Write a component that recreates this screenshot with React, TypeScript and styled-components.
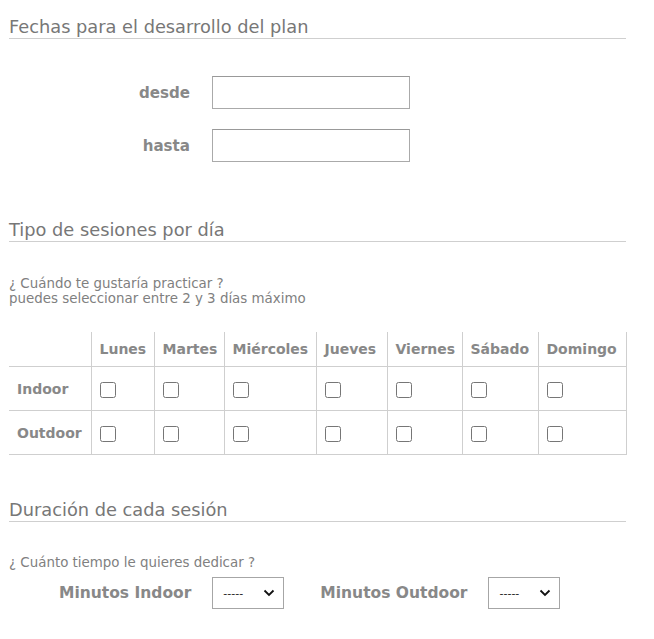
import React from "react";
import styled, { createGlobalStyle } from "styled-components";

const GlobalStyle = createGlobalStyle`
  body {
    margin: 0;
    background: #fff;
    font-family: "DejaVu Sans", Verdana, sans-serif;
    color: #808080;
  }
`;

const days = ["Lunes", "Martes", "Miércoles", "Jueves", "Viernes", "Sábado", "Domingo"];
const colWidths = [82, 63, 70, 92, 71, 75, 76, 88];
const kinds = ["Indoor", "Outdoor"];

const Page = styled.div`
  padding: 17px 28px 30px 9px;
`;

const Heading = styled.h2<{ $top?: number }>`
  margin: ${(p) => p.$top ?? 0}px 0 0;
  padding: 0 0 1px;
  font-size: 17.8px;
  font-weight: normal;
  line-height: 20px;
  color: #777;
  border-bottom: 1px solid #cfcfcf;
`;

const DateGrid = styled.div`
  display: grid;
  grid-template-columns: 181px 198px;
  column-gap: 22px;
  row-gap: 20px;
  margin-top: 37px;
`;

const FieldLabel = styled.label`
  align-self: center;
  text-align: right;
  font-size: 15.1px;
  font-weight: bold;
  color: #888;
`;

const TextInput = styled.input`
  box-sizing: border-box;
  height: 33px;
  width: 198px;
  margin: 0;
  border: 1px solid #aaa;
  border-top-color: #999;
  background: #fff;
`;

const Note = styled.p<{ $top: number }>`
  margin: ${(p) => p.$top}px 0 0;
  font-size: 13.4px;
  line-height: 15px;
  color: #808080;
`;

const DaysTable = styled.table`
  margin-top: 26px;
  width: 617px;
  border-collapse: collapse;
  table-layout: fixed;
`;

const Cell = styled.td<{ $head?: boolean }>`
  height: ${(p) => (p.$head ? 34 : 43)}px;
  padding: 0 0 0 8px;
  border-right: 1px solid #cfcfcf;
  border-bottom: 1px solid #cfcfcf;
  font-size: 14px;
  font-weight: bold;
  color: #888;
  white-space: nowrap;
  vertical-align: middle;
`;

const Check = styled.input`
  width: 16px;
  height: 16px;
  margin: 2px 0 0;
  vertical-align: middle;
`;

const DurationRow = styled.div`
  display: flex;
  align-items: center;
  margin-top: 7px;
  padding-left: 50px;
`;

const DurationLabel = styled.span<{ $gap: number }>`
  margin-left: ${(p) => p.$gap}px;
  margin-right: 21px;
  font-size: 15.5px;
  font-weight: bold;
  color: #888;
`;

const SelectBox = styled.div`
  position: relative;
  width: 72px;
  height: 32px;
`;

const Select = styled.select`
  box-sizing: border-box;
  appearance: none;
  width: 72px;
  height: 32px;
  margin: 0;
  padding: 0 0 0 10px;
  border: 1px solid #a6a6a6;
  border-radius: 0;
  background: #fff;
  font-family: "DejaVu Sans", sans-serif;
  font-size: 11px;
  color: #222;
`;

const Chevron = styled.svg`
  position: absolute;
  right: 9px;
  top: 12px;
  pointer-events: none;
`;

const MinutesSelect = () => (
  <SelectBox>
    <Select defaultValue="">
      <option value="">-----</option>
    </Select>
    <Chevron width="12" height="8" viewBox="0 0 12 8">
      <path d="M1.5 1.5 L6 6 L10.5 1.5" fill="none" stroke="#111" strokeWidth="1.8" />
    </Chevron>
  </SelectBox>
);

export default function App() {
  return (
    <Page>
      <GlobalStyle />
      <Heading>Fechas para el desarrollo del plan</Heading>
      <DateGrid>
        <FieldLabel>desde</FieldLabel>
        <TextInput type="text" />
        <FieldLabel>hasta</FieldLabel>
        <TextInput type="text" />
      </DateGrid>

      <Heading $top={58}>Tipo de sesiones por día</Heading>
      <Note $top={34}>
        ¿ Cuándo te gustaría practicar ?
        <br />
        puedes seleccionar entre 2 y 3 días máximo
      </Note>
      <DaysTable>
        <colgroup>
          {colWidths.map((w, i) => (
            <col key={i} style={{ width: w }} />
          ))}
        </colgroup>
        <thead>
          <tr>
            <Cell $head />
            {days.map((d) => (
              <Cell $head key={d}>
                {d}
              </Cell>
            ))}
          </tr>
        </thead>
        <tbody>
          {kinds.map((k) => (
            <tr key={k}>
              <Cell>{k}</Cell>
              {days.map((d) => (
                <Cell key={d}>
                  <Check type="checkbox" />
                </Cell>
              ))}
            </tr>
          ))}
        </tbody>
      </DaysTable>

      <Heading $top={45}>Duración de cada sesión</Heading>
      <Note $top={33}>¿ Cuánto tiempo le quieres dedicar ?</Note>
      <DurationRow>
        <DurationLabel $gap={0}>Minutos Indoor</DurationLabel>
        <MinutesSelect />
        <DurationLabel $gap={36}>Minutos Outdoor</DurationLabel>
        <MinutesSelect />
      </DurationRow>
    </Page>
  );
}
